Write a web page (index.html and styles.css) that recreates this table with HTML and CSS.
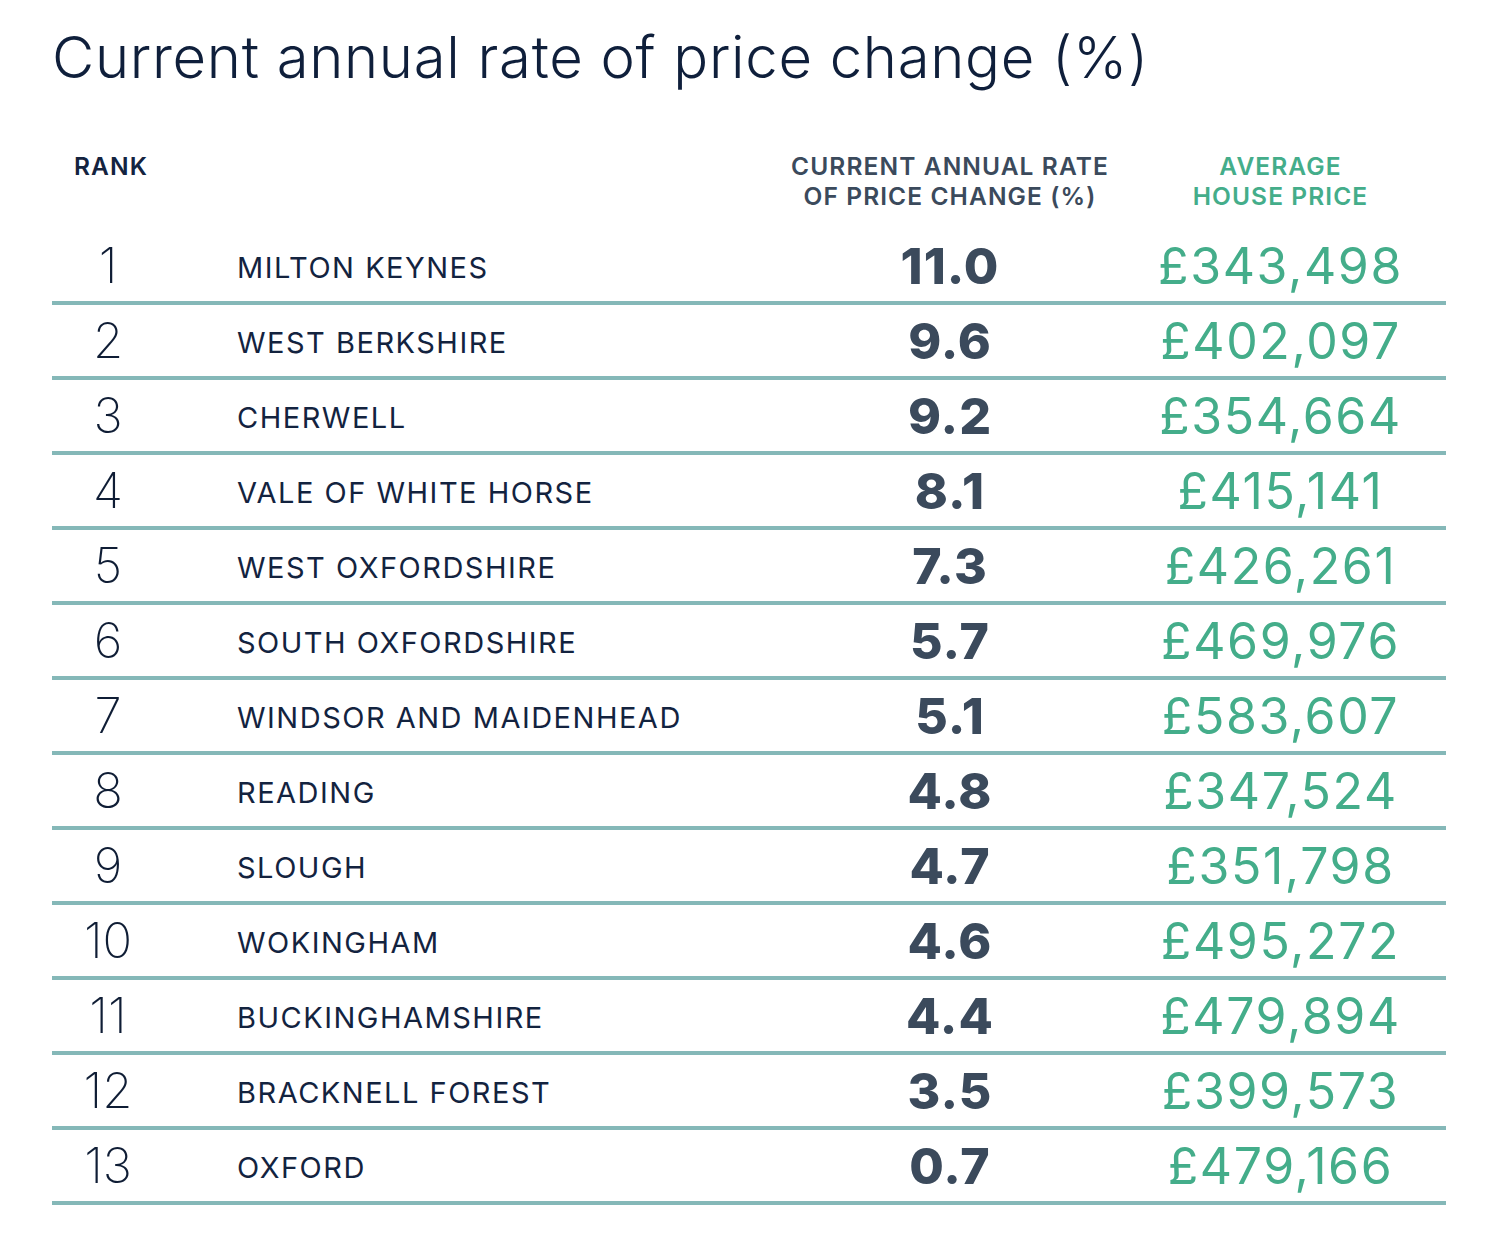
FILE: index.html
```html
<!DOCTYPE html>
<html lang="en">
<head>
<meta charset="utf-8">
<title>Current annual rate of price change (%)</title>
<link rel="stylesheet" href="styles.css">
</head>
<body>
<div class="page">
  <h1 class="title">Current annual rate of price change (%)</h1>
  <div class="table">
    <div class="head">
      <div class="h-rank">RANK</div>
      <div class="h-name"></div>
      <div class="h-rate">CURRENT ANNUAL RATE<br>OF PRICE CHANGE (%)</div>
      <div class="h-price">AVERAGE<br>HOUSE PRICE</div>
    </div>
    <div class="row"><div class="rank">1</div><div class="name">MILTON KEYNES</div><div class="rate">11.0</div><div class="price">£343,498</div></div>
    <div class="row"><div class="rank">2</div><div class="name">WEST BERKSHIRE</div><div class="rate">9.6</div><div class="price">£402,097</div></div>
    <div class="row"><div class="rank">3</div><div class="name">CHERWELL</div><div class="rate">9.2</div><div class="price">£354,664</div></div>
    <div class="row"><div class="rank">4</div><div class="name">VALE OF WHITE HORSE</div><div class="rate">8.1</div><div class="price">£415,141</div></div>
    <div class="row"><div class="rank">5</div><div class="name">WEST OXFORDSHIRE</div><div class="rate">7.3</div><div class="price">£426,261</div></div>
    <div class="row"><div class="rank">6</div><div class="name">SOUTH OXFORDSHIRE</div><div class="rate">5.7</div><div class="price">£469,976</div></div>
    <div class="row"><div class="rank">7</div><div class="name">WINDSOR AND MAIDENHEAD</div><div class="rate">5.1</div><div class="price">£583,607</div></div>
    <div class="row"><div class="rank">8</div><div class="name">READING</div><div class="rate">4.8</div><div class="price">£347,524</div></div>
    <div class="row"><div class="rank">9</div><div class="name">SLOUGH</div><div class="rate">4.7</div><div class="price">£351,798</div></div>
    <div class="row"><div class="rank">10</div><div class="name">WOKINGHAM</div><div class="rate">4.6</div><div class="price">£495,272</div></div>
    <div class="row"><div class="rank">11</div><div class="name">BUCKINGHAMSHIRE</div><div class="rate">4.4</div><div class="price">£479,894</div></div>
    <div class="row"><div class="rank">12</div><div class="name">BRACKNELL FOREST</div><div class="rate">3.5</div><div class="price">£399,573</div></div>
    <div class="row"><div class="rank">13</div><div class="name">OXFORD</div><div class="rate">0.7</div><div class="price">£479,166</div></div>
  </div>
</div>
</body>
</html>
```
FILE: styles.css
```css
html, body {
  margin: 0;
  padding: 0;
  background: #ffffff;
}
body {
  font-family: Inter, "Noto Sans", "DejaVu Sans", sans-serif;
  color: #0f1f3b;
}
.page {
  width: 1394px;
  padding: 22px 0 0 52px;
}
.title {
  margin: 0;
  font-size: 58px;
  font-weight: 300;
  line-height: 70px;
  color: #0f1f3b;
  letter-spacing: 0.7px;
}
.table {
  margin-top: 58px;
}
.head, .row {
  display: grid;
  grid-template-columns: 112px 621px 330px 331px;
}
.head {
  height: 80px;
  font-size: 24.5px;
  font-weight: 600;
  line-height: 30px;
  letter-spacing: 1.1px;
}
.h-rank {
  padding-left: 22px;
  color: #14233f;
  padding-top: 1px;
}
.h-rate {
  text-align: center;
  color: #3b4a5c;
  padding-top: 1px;
}
.h-price {
  text-align: center;
  color: #44ad8a;
  padding-top: 1px;
}
.row {
  height: 71px;
  border-bottom: 4px solid #85b8b8;
  align-items: center;
}
.rank {
  text-align: center;
  font-size: 49px;
  font-weight: 200;
  color: #0f1d35;
}
.name {
  padding-left: 73px;
  padding-top: 4px;
  font-size: 29px;
  font-weight: 400;
  letter-spacing: 1.5px;
  color: #13233f;
}
.rate {
  text-align: center;
  font-size: 50px;
  font-weight: 800;
  color: #3b4a5c;
  letter-spacing: 1px;
}
.price {
  text-align: center;
  font-size: 50px;
  font-weight: 400;
  color: #44ad8a;
  letter-spacing: 1.6px;
}
```
